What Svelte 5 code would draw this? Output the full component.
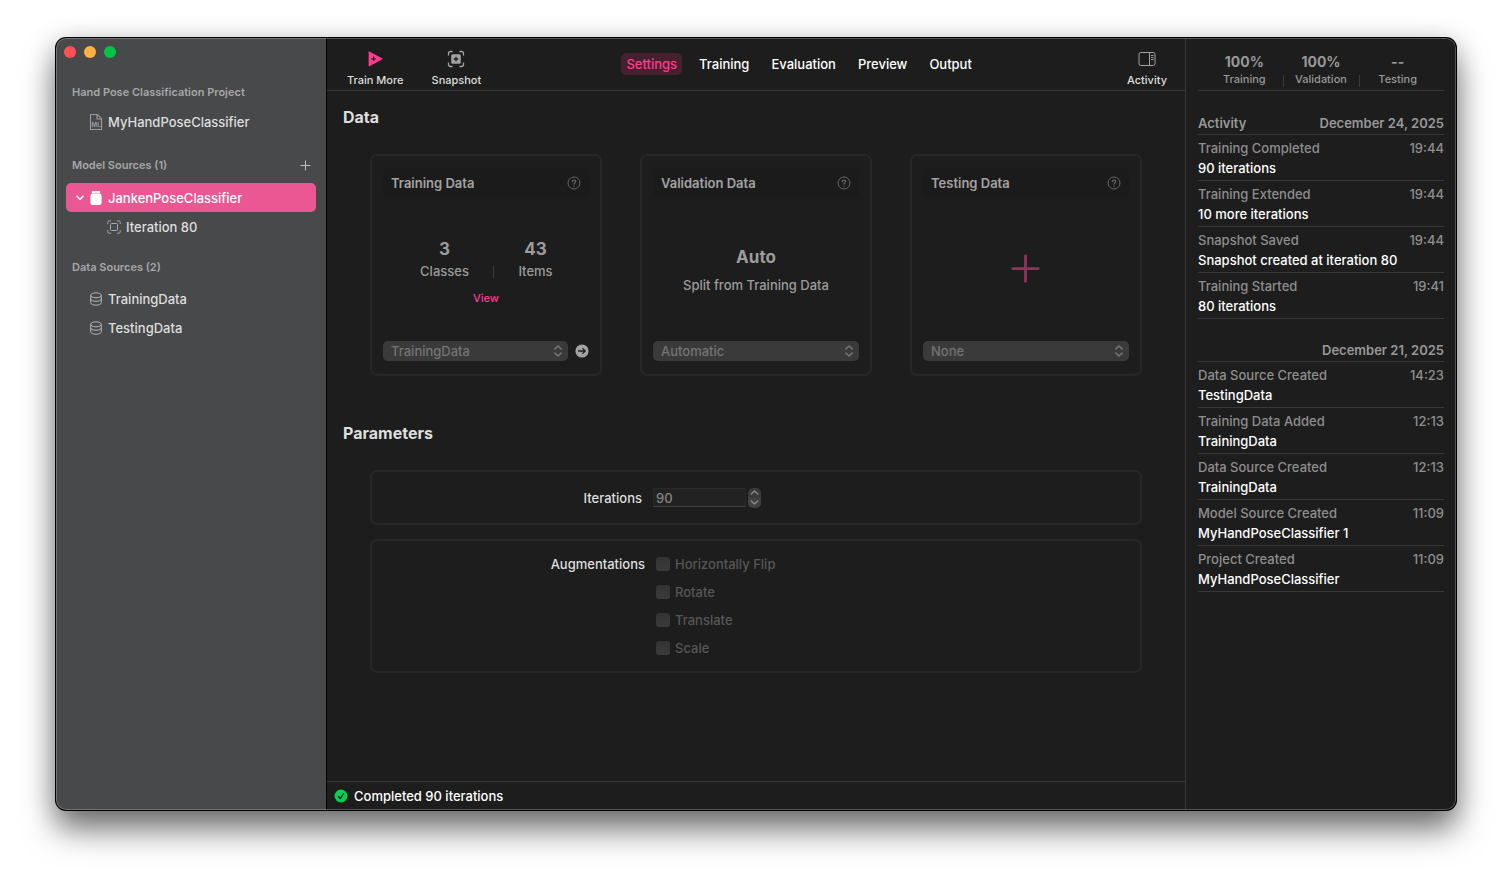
<script lang="ts">
	interface Entry {
		title: string;
		time: string;
		detail: string;
	}

	interface ActivityGroup {
		label: string;
		date: string;
		entries: Entry[];
	}

	const tabs = ['Settings', 'Training', 'Evaluation', 'Preview', 'Output'];
	let activeTab = $state('Settings');

	const dataSources = ['TrainingData', 'TestingData'];

	let augmentations = $state([
		{ id: 'flip', label: 'Horizontally Flip', checked: false },
		{ id: 'rotate', label: 'Rotate', checked: false },
		{ id: 'translate', label: 'Translate', checked: false },
		{ id: 'scale', label: 'Scale', checked: false }
	]);

	const metrics = [
		{ value: '100%', label: 'Training' },
		{ value: '100%', label: 'Validation' },
		{ value: '--', label: 'Testing' }
	];

	const activity: ActivityGroup[] = [
		{
			label: 'Activity',
			date: 'December 24, 2025',
			entries: [
				{ title: 'Training Completed', time: '19:44', detail: '90 iterations' },
				{ title: 'Training Extended', time: '19:44', detail: '10 more iterations' },
				{ title: 'Snapshot Saved', time: '19:44', detail: 'Snapshot created at iteration 80' },
				{ title: 'Training Started', time: '19:41', detail: '80 iterations' }
			]
		},
		{
			label: '',
			date: 'December 21, 2025',
			entries: [
				{ title: 'Data Source Created', time: '14:23', detail: 'TestingData' },
				{ title: 'Training Data Added', time: '12:13', detail: 'TrainingData' },
				{ title: 'Data Source Created', time: '12:13', detail: 'TrainingData' },
				{ title: 'Model Source Created', time: '11:09', detail: 'MyHandPoseClassifier 1' },
				{ title: 'Project Created', time: '11:09', detail: 'MyHandPoseClassifier' }
			]
		}
	];
</script>

{#snippet cardHeader(title: string)}
	<header class="card-header">
		<h3>{title}</h3>
		<button class="help" aria-label="About {title}">
			<svg width="14" height="14" viewBox="0 0 14 14" fill="none" stroke="currentColor">
				<circle cx="7" cy="7" r="6" />
				<path d="M5.3 5.7C5.3 3.5 8.8 3.6 8.8 5.6C8.8 6.8 7 6.8 7 8.1" stroke-width="1.2" stroke-linecap="round" />
				<circle cx="7" cy="10" r="0.7" fill="currentColor" stroke="none" />
			</svg>
		</button>
	</header>
{/snippet}

{#snippet picker(id: string, label: string, value: string)}
	<div class="picker">
		<select {id} aria-label={label} disabled>
			<option>{value}</option>
		</select>
		<svg class="picker-arrows" width="10" height="12" viewBox="0 0 10 12" fill="none" stroke="currentColor" stroke-width="1.5" stroke-linecap="round" stroke-linejoin="round">
			<path d="M1.8 4L5 1L8.2 4M1.8 8L5 11L8.2 8" />
		</svg>
	</div>
{/snippet}

<div class="desktop">
	<div class="window">
		<aside class="sidebar">
			<div class="lights">
				<button class="light red" aria-label="Close"></button>
				<button class="light yellow" aria-label="Minimize"></button>
				<button class="light green" aria-label="Zoom"></button>
			</div>

			<section class="group project">
				<h2>Hand Pose Classification Project</h2>
				<button class="item">
					<svg width="14" height="18" viewBox="0 0 14 18" fill="none" stroke="#98999a" stroke-width="1.2">
						<path d="M1.5 1.5H8.3L12.5 5.7V16.5H1.5Z M8 1.5V6H12.5" />
						<text x="2.6" y="14" font-size="6" font-weight="700" fill="#98999a" stroke="none">ML</text>
					</svg>
					<span>MyHandPoseClassifier</span>
				</button>
			</section>

			<section class="group">
				<div class="group-head">
					<h2>Model Sources (1)</h2>
					<button class="add" aria-label="Add model source">
						<svg width="11" height="11" viewBox="0 0 11 11" stroke="#bfc0c0">
							<path d="M5.5 0.5V10.5M0.5 5.5H10.5" />
						</svg>
					</button>
				</div>
				<button class="item selected">
					<svg width="8" height="6" viewBox="0 0 8 6" fill="none" stroke="#fff" stroke-width="1.5" stroke-linecap="round" stroke-linejoin="round">
						<path d="M1 1.2L4 4.4L7 1.2" />
					</svg>
					<svg width="14" height="16" viewBox="0 0 14 16" fill="#fff">
						<rect x="2.8" y="1" width="8.4" height="2.2" rx="0.7" />
						<rect x="1.4" y="3.6" width="11.2" height="11.4" rx="2.2" />
					</svg>
					<span>JankenPoseClassifier</span>
				</button>
				<button class="item child">
					<svg width="14" height="14" viewBox="0 0 14 14" fill="none" stroke="#a8a9aa">
						<path d="M0.8 4V2.3Q0.8 0.8 2.3 0.8H4M10 0.8H11.7Q13.2 0.8 13.2 2.3V4M13.2 10V11.7Q13.2 13.2 11.7 13.2H10M4 13.2H2.3Q0.8 13.2 0.8 11.7V10" />
						<rect x="3.5" y="3.5" width="7" height="7" rx="1" />
					</svg>
					<span>Iteration 80</span>
				</button>
			</section>

			<section class="group">
				<h2>Data Sources (2)</h2>
				{#each dataSources as source}
					<button class="item">
						<svg width="14" height="14" viewBox="0 0 14 14" fill="none" stroke="#b4b5b5">
							<ellipse cx="7" cy="3.3" rx="5.3" ry="2.5" />
							<path d="M1.7 3.3V10.7C1.7 14 12.3 14 12.3 10.7V3.3M1.7 6.8C1.7 10.1 12.3 10.1 12.3 6.8" />
						</svg>
						<span>{source}</span>
					</button>
				{/each}
			</section>
		</aside>

		<main class="main">
			<div class="toolbar">
				<div class="tools">
					<button class="tool">
						<svg width="18" height="18" viewBox="0 0 18 18">
							<path d="M3.4 1.4L16 8.2Q16.8 8.8 16 9.4L3.4 16.3Q2.6 16.6 2.6 15.8V1.9Q2.6 1.1 3.4 1.4Z" fill="#ff3b8f" />
							<path d="M7.6 6.6V11M5.4 8.8H9.8" stroke="#1d1d1d" stroke-width="1.2" />
						</svg>
						<span>Train More</span>
					</button>
					<button class="tool">
						<svg width="18" height="18" viewBox="0 0 18 18" fill="none" stroke="#a1a1a1" stroke-width="1.3">
							<path d="M1.5 5.4V3.5Q1.5 1.5 3.5 1.5H5.6M12.4 1.5H14.5Q16.5 1.5 16.5 3.5V5.4M16.5 12.6V14.5Q16.5 16.5 14.5 16.5H12.4M5.6 16.5H3.5Q1.5 16.5 1.5 14.5V12.6" />
							<rect x="4.2" y="4.2" width="9.6" height="9.6" rx="1.5" fill="#a1a1a1" stroke="none" />
							<path d="M9 6.8V11.2M6.8 9H11.2" stroke="#1d1d1d" />
						</svg>
						<span>Snapshot</span>
					</button>
				</div>
				<nav class="tabs">
					{#each tabs as tab}
						<button class="tab" class:active={activeTab === tab} onclick={() => (activeTab = tab)}>{tab}</button>
					{/each}
				</nav>
				<button class="tool">
					<svg width="18" height="18" viewBox="0 0 18 18" fill="none" stroke="#a1a1a1">
						<rect x="1" y="2.5" width="16" height="13" rx="1.8" />
						<path d="M11.5 2.5V15.5M13 5.5H15.5M13 7.5H15.5M13 9.5H15.5" />
					</svg>
					<span>Activity</span>
				</button>
			</div>

			<div class="content">
				<h2 class="title">Data</h2>
				<div class="cards">
					<article class="card">
						{@render cardHeader('Training Data')}
						<div class="card-body counted">
							<dl class="counts">
								<div>
									<dt>Classes</dt>
									<dd>3</dd>
								</div>
								<div>
									<dt>Items</dt>
									<dd>43</dd>
								</div>
							</dl>
							<button class="view">View</button>
						</div>
						<footer class="card-footer">
							{@render picker('training-source', 'Training data source', 'TrainingData')}
							<button class="go" aria-label="Open data source">
								<svg width="14" height="14" viewBox="0 0 14 14" fill="none">
									<circle cx="7" cy="7" r="6.6" fill="#a3a3a3" />
									<path d="M3.6 7H10.2M7.8 4.6L10.2 7L7.8 9.4" stroke="#1d1d1d" stroke-width="1.3" stroke-linecap="round" stroke-linejoin="round" />
								</svg>
							</button>
						</footer>
					</article>

					<article class="card">
						{@render cardHeader('Validation Data')}
						<div class="card-body summary">
							<strong class="big">Auto</strong>
							<span class="sub">Split from Training Data</span>
						</div>
						<footer class="card-footer">
							{@render picker('validation-source', 'Validation data source', 'Automatic')}
						</footer>
					</article>

					<article class="card">
						{@render cardHeader('Testing Data')}
						<div class="card-body">
							<button class="drop" aria-label="Add testing data">
								<svg width="30" height="30" viewBox="0 0 30 30" stroke="#96305a" stroke-width="2.8" stroke-linecap="round">
									<path d="M14.5 2V27.4M1.8 14.7H27.2" />
								</svg>
							</button>
						</div>
						<footer class="card-footer">
							{@render picker('testing-source', 'Testing data source', 'None')}
						</footer>
					</article>
				</div>

				<h2 class="title parameters">Parameters</h2>
				<div class="panel iterations">
					<label for="iterations">Iterations</label>
					<div class="number">
						<input id="iterations" type="text" value="90" disabled />
						<div class="stepper">
							<button aria-label="Increase" disabled>
								<svg width="9" height="5" viewBox="0 0 9 5" fill="none" stroke="#8a8a8a" stroke-width="1.4" stroke-linecap="round" stroke-linejoin="round">
									<path d="M1.2 4L4.5 1L7.8 4" />
								</svg>
							</button>
							<button aria-label="Decrease" disabled>
								<svg width="9" height="5" viewBox="0 0 9 5" fill="none" stroke="#8a8a8a" stroke-width="1.4" stroke-linecap="round" stroke-linejoin="round">
									<path d="M1.2 1L4.5 4L7.8 1" />
								</svg>
							</button>
						</div>
					</div>
				</div>
				<div class="panel augmentations" role="group" aria-labelledby="augmentations-label">
					<span id="augmentations-label">Augmentations</span>
					<div class="checks">
						{#each augmentations as option}
							<label class="check" for={option.id}>
								<input id={option.id} type="checkbox" bind:checked={option.checked} disabled />
								{option.label}
							</label>
						{/each}
					</div>
				</div>
			</div>

			<footer class="status">
				<svg width="14" height="14" viewBox="0 0 14 14" fill="none">
					<circle cx="7" cy="7" r="6.5" fill="#00d154" />
					<path d="M4.4 7.4L6.3 9.6L9.6 4.5" stroke="#1d1d1d" stroke-width="1.3" stroke-linecap="round" stroke-linejoin="round" />
				</svg>
				<span>Completed 90 iterations</span>
			</footer>
		</main>

		<aside class="inspector">
			<div class="metrics">
				{#each metrics as metric}
					<div class="metric">
						<strong>{metric.value}</strong>
						<span>{metric.label}</span>
					</div>
				{/each}
			</div>
			{#each activity as group}
				<section class="log">
					<header class="log-head">
						<span>{group.label}</span>
						<span>{group.date}</span>
					</header>
					{#each group.entries as entry}
						<div class="entry">
							<div class="entry-top">
								<span>{entry.title}</span>
								<time>{entry.time}</time>
							</div>
							<div class="entry-detail">{entry.detail}</div>
						</div>
					{/each}
				</section>
			{/each}
		</aside>
	</div>
</div>

<style>
	:global(body) {
		background: #fff;
	}

	.desktop {
		box-sizing: border-box;
		min-height: 100vh;
		padding: 38px 56px 74px;
		display: flex;
		font-family: Inter, 'Liberation Sans', sans-serif;
		font-size: 13px;
		font-weight: 500;
		line-height: 20px;
		color: #dedede;
	}

	.window {
		position: relative;
		flex: 1;
		display: flex;
		border-radius: 10px;
		overflow: hidden;
		background: #1d1d1d;
		box-shadow:
			0 0 0 1px #000,
			0 20px 32px rgba(0, 0, 0, 0.5),
			0 4px 28px rgba(0, 0, 0, 0.22);
	}

	/* Light rim along the window edge */
	.window::after {
		content: '';
		position: absolute;
		inset: 0;
		border-radius: 10px;
		box-shadow: inset 0 0 0 1px rgba(255, 255, 255, 0.24);
		pointer-events: none;
	}

	h2,
	h3,
	dl,
	dd {
		margin: 0;
	}

	svg {
		display: block;
		flex-shrink: 0;
	}

	button {
		display: flex;
		align-items: center;
		padding: 0;
		border: none;
		background: none;
		font: inherit;
		color: inherit;
	}

	/* Sidebar */
	.sidebar {
		width: 270px;
		flex-shrink: 0;
		background: #48494a;
		border-right: 1px solid #000;
	}

	.lights {
		display: flex;
		gap: 8px;
		padding: 8px 8px 24px;
	}

	.light {
		width: 12px;
		height: 12px;
		border-radius: 50%;
	}

	.red {
		background: #ff5153;
	}

	.yellow {
		background: #ffb141;
	}

	.green {
		background: #00c543;
	}

	.group {
		padding: 0 10px;
		margin-bottom: 16px;
	}

	.project {
		margin-bottom: 19px;
	}

	.group h2 {
		padding: 0 6px;
		margin-bottom: 7px;
		font-size: 11px;
		font-weight: 600;
		line-height: 20px;
		color: #a6a7a8;
	}

	.project h2 {
		margin-bottom: 5px;
	}

	.group-head {
		display: flex;
		justify-content: space-between;
		padding-bottom: 1px;
	}

	.add {
		height: 20px;
		margin-right: 5px;
	}

	.item {
		box-sizing: border-box;
		width: 100%;
		height: 29px;
		padding-left: 23px;
		gap: 5px;
		border-radius: 5px;
	}

	.item.selected {
		padding-left: 10px;
		background: #ea5793;
		color: #fff;
	}

	.item.child {
		padding-left: 41px;
	}

	/* Toolbar */
	.main {
		flex: 1;
		min-width: 0;
		display: flex;
		flex-direction: column;
		border-right: 1px solid #383838;
	}

	.toolbar {
		height: 52px;
		padding: 0 18px 0 20px;
		display: flex;
		justify-content: space-between;
		align-items: center;
		border-bottom: 1px solid #383838;
	}

	.tools {
		display: flex;
		gap: 28px;
	}

	.tool {
		flex-direction: column;
		gap: 4px;
		padding-top: 10px;
		font-size: 11px;
		line-height: 16px;
	}

	.tabs {
		display: flex;
		gap: 12px;
		padding-right: 10px;
	}

	.tab {
		height: 22px;
		padding: 0 5px;
		border-radius: 5px;
		color: #fff;
	}

	.tab.active {
		background: #47202f;
		color: #ff3b8f;
	}

	/* Settings */
	.content {
		flex: 1;
		padding: 14px 43px;
	}

	.title {
		margin: 0 -27px 25px;
		font-size: 16px;
		font-weight: 700;
		line-height: 24px;
	}

	.title.parameters {
		margin-top: 45px;
	}

	.cards {
		display: grid;
		grid-template-columns: repeat(3, minmax(0, 1fr));
		gap: 38px;
	}

	.card,
	.panel {
		box-sizing: border-box;
		border: 2px solid #272727;
		border-radius: 7px;
	}

	.card {
		display: flex;
		flex-direction: column;
		height: 222px;
		padding: 13px 11px;
	}

	.card-header {
		display: flex;
		align-items: center;
		justify-content: space-between;
		height: 28px;
		padding: 0 8px;
		border-radius: 4px;
		background: #1b1b1b;
	}

	.card-header h3 {
		font-size: 13px;
		font-weight: 600;
		color: #a3a3a3;
	}

	.help {
		color: #666;
	}

	.card-body {
		flex: 1;
		display: flex;
		flex-direction: column;
		align-items: center;
		justify-content: center;
		gap: 6px;
		color: #9c9c9c;
	}

	.card-body.counted {
		padding-top: 8px;
	}

	.card-body.summary {
		padding-top: 4px;
	}

	.counts {
		display: flex;
		padding-left: 8px;
	}

	.counts div {
		display: flex;
		flex-direction: column-reverse;
		align-items: center;
		width: 91px;
	}

	.counts div + div {
		background: linear-gradient(#3a3a3a, #3a3a3a) 3px 28px / 1px 12px no-repeat;
	}

	.counts dt,
	.sub {
		line-height: 22px;
	}

	.counts dd,
	.big {
		font-size: 17px;
		font-weight: 700;
		line-height: 22px;
	}

	.view {
		font-size: 11px;
		color: #ff3b8f;
	}

	.card-footer {
		display: flex;
		align-items: center;
		gap: 7px;
	}

	.picker {
		position: relative;
		flex: 1;
	}

	.picker select {
		display: block;
		width: 100%;
		height: 20px;
		padding: 0 8px 2px;
		appearance: none;
		border: none;
		border-radius: 5px;
		background: #3a3a3a;
		font: inherit;
		color: #747474;
		opacity: 1;
	}

	.picker-arrows {
		position: absolute;
		top: 4px;
		right: 5px;
		color: #787878;
		pointer-events: none;
	}

	.panel {
		display: grid;
		grid-template-columns: 270px 1fr;
	}

	.iterations {
		align-items: center;
		gap: 11px;
		height: 55px;
		margin-bottom: 14px;
	}

	.iterations > label,
	.augmentations > span {
		text-align: right;
	}

	.number {
		display: flex;
		align-items: center;
		gap: 2px;
	}

	.number input {
		box-sizing: border-box;
		width: 93px;
		height: 19px;
		padding: 0 2px;
		border: 1px solid #292929;
		border-bottom-color: #444;
		background: #222;
		font: inherit;
		color: #838383;
	}

	.stepper {
		display: flex;
		flex-direction: column;
		border-radius: 5px;
		overflow: hidden;
		background: #3a3a3a;
	}

	.stepper button {
		justify-content: center;
		width: 13px;
		height: 10px;
	}

	.stepper button + button {
		background: #414141;
	}

	.augmentations {
		grid-template-columns: 273px 1fr;
		gap: 11px;
		padding: 13px 0;
	}

	.checks {
		display: flex;
		flex-direction: column;
		gap: 8px;
	}

	.check {
		display: flex;
		align-items: center;
		gap: 5px;
		line-height: 20px;
		color: #565656;
	}

	.check input {
		appearance: none;
		width: 14px;
		height: 14px;
		margin: 0;
		border-radius: 3px;
		background: linear-gradient(#333, #3b3b3b);
	}

	.status {
		display: flex;
		align-items: center;
		gap: 6px;
		height: 28px;
		padding: 0 7px;
		border-top: 1px solid #383838;
		color: #fff;
	}

	/* Inspector */
	.inspector {
		box-sizing: border-box;
		width: 270px;
		flex-shrink: 0;
		padding: 0 12px;
	}

	.metrics {
		box-sizing: border-box;
		display: grid;
		grid-template-columns: repeat(3, 1fr);
		height: 53px;
		padding: 15px 8px 0;
		margin-bottom: 22px;
		border-bottom: 1px solid #383838;
	}

	.metric {
		display: flex;
		flex-direction: column;
		align-items: center;
		color: #989898;
	}

	.metric + .metric {
		background: linear-gradient(#3a3a3a, #3a3a3a) 0 22px / 1px 12px no-repeat;
	}

	.metric strong {
		font-size: 14px;
		font-weight: 700;
		line-height: 18px;
	}

	.metric span {
		font-size: 11px;
		line-height: 16px;
	}

	.log {
		margin-bottom: 21px;
	}

	.log-head {
		display: flex;
		justify-content: space-between;
		padding-bottom: 1px;
		border-bottom: 1px solid #383838;
		font-weight: 600;
		color: #989898;
	}

	.entry {
		padding: 3px 0 2px;
		border-bottom: 1px solid #383838;
	}

	.entry-top {
		display: flex;
		justify-content: space-between;
		color: #8e8e8e;
	}

	.entry-detail {
		color: #fff;
	}
</style>
